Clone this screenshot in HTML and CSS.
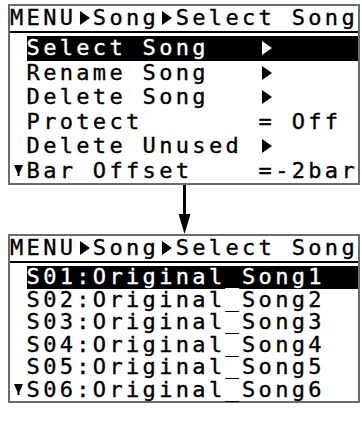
FILE: index.html
```html
<!DOCTYPE html>
<html>
<head>
<meta charset="utf-8">
<link rel="stylesheet" href="styles.css">
</head>
<body>
<div class="page">
  <div class="lcd lcd-top">
    <div class="hdr">MENU<span class="tri"><svg viewBox="0 0 10 14" width="10" height="14"><polygon points="0,0 10,7 0,14" /></svg></span>Song<span class="tri"><svg viewBox="0 0 10 14" width="10" height="14"><polygon points="0,0 10,7 0,14" /></svg></span>Select Song</div>
    <div class="rows">
      <div class="row"><span class="mk"></span><div class="body sel"><span class="lbl">Select Song</span><span class="val"><span class="tri"><svg viewBox="0 0 10 14" width="10" height="14"><polygon points="0,0 10,7 0,14" /></svg></span></span></div></div>
      <div class="row"><span class="mk"></span><div class="body"><span class="lbl">Rename Song</span><span class="val"><span class="tri"><svg viewBox="0 0 10 14" width="10" height="14"><polygon points="0,0 10,7 0,14" /></svg></span></span></div></div>
      <div class="row"><span class="mk"></span><div class="body"><span class="lbl">Delete Song</span><span class="val"><span class="tri"><svg viewBox="0 0 10 14" width="10" height="14"><polygon points="0,0 10,7 0,14" /></svg></span></span></div></div>
      <div class="row"><span class="mk"></span><div class="body"><span class="lbl">Protect</span><span class="val">= Off</span></div></div>
      <div class="row"><span class="mk"></span><div class="body"><span class="lbl">Delete Unused</span><span class="val"><span class="tri"><svg viewBox="0 0 10 14" width="10" height="14"><polygon points="0,0 10,7 0,14" /></svg></span></span></div></div>
      <div class="row"><span class="mk"><svg viewBox="0 0 9 11" width="9" height="11"><polygon points="0,0 9,0 5.5,8 5.5,11 3.5,11 3.5,8" /></svg></span><div class="body"><span class="lbl">Bar Offset</span><span class="val">=-2bar</span></div></div>
    </div>
  </div>
  <div class="arrow">
    <svg viewBox="0 0 20 49" width="20" height="49"><rect x="9" y="0" width="3" height="32" /><polygon points="4.5,29 16.5,29 10.5,49" /></svg>
  </div>
  <div class="lcd lcd-bottom">
    <div class="hdr">MENU<span class="tri"><svg viewBox="0 0 10 14" width="10" height="14"><polygon points="0,0 10,7 0,14" /></svg></span>Song<span class="tri"><svg viewBox="0 0 10 14" width="10" height="14"><polygon points="0,0 10,7 0,14" /></svg></span>Select Song</div>
    <div class="rows">
      <div class="row"><span class="mk"></span><div class="body sel"><span class="lbl">S01:Original_Song1</span></div></div>
      <div class="row"><span class="mk"></span><div class="body"><span class="lbl">S02:Original_Song2</span></div></div>
      <div class="row"><span class="mk"></span><div class="body"><span class="lbl">S03:Original_Song3</span></div></div>
      <div class="row"><span class="mk"></span><div class="body"><span class="lbl">S04:Original_Song4</span></div></div>
      <div class="row"><span class="mk"></span><div class="body"><span class="lbl">S05:Original_Song5</span></div></div>
      <div class="row"><span class="mk"><svg viewBox="0 0 9 11" width="9" height="11"><polygon points="0,0 9,0 5.5,8 5.5,11 3.5,11 3.5,8" /></svg></span><div class="body"><span class="lbl">S06:Original_Song6</span></div></div>
    </div>
  </div>
</div>
</body>
</html>
```
FILE: styles.css
```css
html, body {
  margin: 0;
  padding: 0;
  background: #ffffff;
}

body {
  font-family: "DejaVu Sans Mono", "Liberation Mono", monospace;
  color: #000;
}

.page {
  padding: 4px 0 0 8px;
  width: 352px;
}

.lcd {
  border: 2px solid #6b6b6b;
  background: #fff;
}

.hdr {
  font-size: 22px;
  line-height: 22px;
  letter-spacing: 3.33px;
  white-space: pre;
  padding-top: 1px;
  padding-bottom: 2px;
  border-bottom: 2px solid #000;
  display: flex;
  align-items: center;
  -webkit-text-stroke: 0.35px currentColor;
}

.tri {
  display: inline-flex;
  align-items: center;
  justify-content: center;
  width: 16.57px;
  height: 22px;
}

.tri svg {
  fill: currentColor;
}

.rows {
  padding-top: 3px;
  display: flex;
  flex-direction: column;
}

.row {
  display: flex;
  font-size: 22px;
  letter-spacing: 3.33px;
  white-space: pre;
  -webkit-text-stroke: 0.35px currentColor;
}

.lcd-top .row {
  height: 24.5px;
  line-height: 24.5px;
}

.lcd-bottom .row {
  height: 22.5px;
  line-height: 22.5px;
}

.mk {
  width: 16.57px;
  flex: none;
  display: flex;
  align-items: center;
  justify-content: center;
}

.mk svg {
  fill: #000;
}

.body {
  flex: 1;
  display: flex;
  align-items: center;
}

.body.sel {
  background: #000;
  color: #fff;
}

.lbl {
  width: 232px;
  flex: none;
}

.val {
  display: flex;
  align-items: center;
}

.arrow {
  display: flex;
  padding-left: 166px;
  height: 49px;
}
```
